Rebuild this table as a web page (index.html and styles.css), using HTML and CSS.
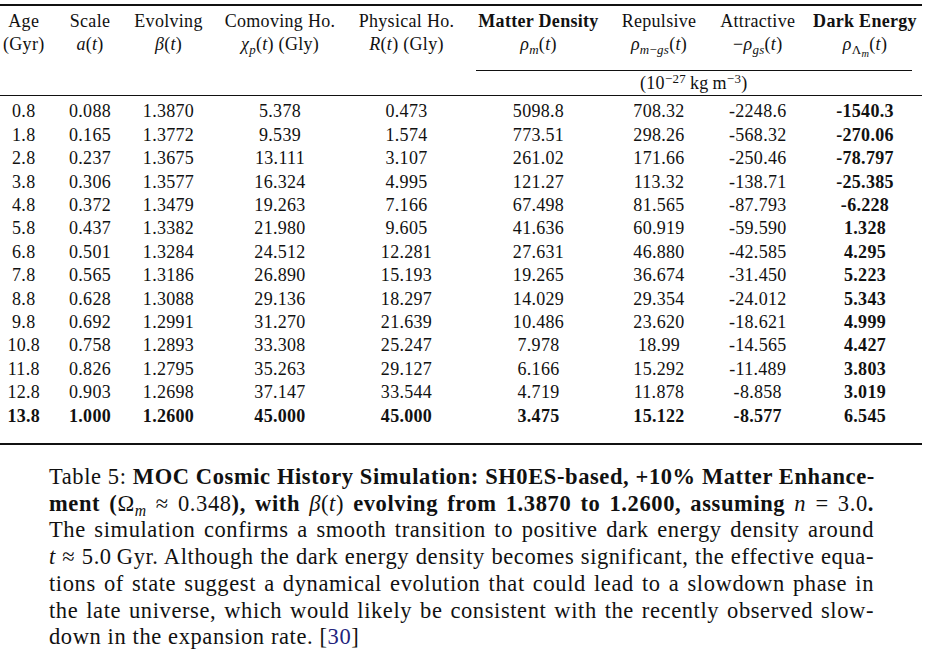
FILE: index.html
```html
<!DOCTYPE html>
<html lang="en">
<head>
<meta charset="utf-8">
<title>MOC Cosmic History Simulation</title>
<link rel="stylesheet" href="styles.css">
</head>
<body>
<div class="page">
  <table class="data">
    <colgroup>
      <col class="w1"><col class="w2"><col class="w3"><col class="w4"><col class="w5"><col class="w6"><col class="w7"><col class="w8"><col class="w9">
    </colgroup>
    <thead>
      <tr class="h1">
        <th class="c1">Age</th>
        <th>Scale</th>
        <th>Evolving</th>
        <th>Comoving Ho.</th>
        <th>Physical Ho.</th>
        <th class="b">Matter Density</th>
        <th>Repulsive</th>
        <th>Attractive</th>
        <th class="b">Dark Energy</th>
      </tr>
      <tr class="h2">
        <th class="c1">(Gyr)</th>
        <th><i>a</i>(<i>t</i>)</th>
        <th><i>β</i>(<i>t</i>)</th>
        <th><i>χ</i><sub><i>p</i></sub>(<i>t</i>) (Gly)</th>
        <th><i>R</i>(<i>t</i>) (Gly)</th>
        <th><i>ρ</i><sub><i>m</i></sub>(<i>t</i>)</th>
        <th><i>ρ</i><sub><i>m</i>−<i>gs</i></sub>(<i>t</i>)</th>
        <th>−<i>ρ</i><sub><i>gs</i></sub>(<i>t</i>)</th>
        <th><i>ρ</i><sub>Λ<sub class="sub2"><i>m</i></sub></sub>(<i>t</i>)</th>
      </tr>
      <tr class="units">
        <th colspan="5"></th>
        <th colspan="4"><div class="unit">(10<sup>−27</sup>&#8201;kg&#8201;m<sup>−3</sup>)</div></th>
      </tr>
    </thead>
    <tbody>
      <tr class="first"><td class="c1">0.8</td><td>0.088</td><td>1.3870</td><td>5.378</td><td>0.473</td><td>5098.8</td><td>708.32</td><td>-2248.6</td><td class="b">-1540.3</td></tr>
      <tr><td class="c1">1.8</td><td>0.165</td><td>1.3772</td><td>9.539</td><td>1.574</td><td>773.51</td><td>298.26</td><td>-568.32</td><td class="b">-270.06</td></tr>
      <tr><td class="c1">2.8</td><td>0.237</td><td>1.3675</td><td>13.111</td><td>3.107</td><td>261.02</td><td>171.66</td><td>-250.46</td><td class="b">-78.797</td></tr>
      <tr><td class="c1">3.8</td><td>0.306</td><td>1.3577</td><td>16.324</td><td>4.995</td><td>121.27</td><td>113.32</td><td>-138.71</td><td class="b">-25.385</td></tr>
      <tr><td class="c1">4.8</td><td>0.372</td><td>1.3479</td><td>19.263</td><td>7.166</td><td>67.498</td><td>81.565</td><td>-87.793</td><td class="b">-6.228</td></tr>
      <tr><td class="c1">5.8</td><td>0.437</td><td>1.3382</td><td>21.980</td><td>9.605</td><td>41.636</td><td>60.919</td><td>-59.590</td><td class="b">1.328</td></tr>
      <tr><td class="c1">6.8</td><td>0.501</td><td>1.3284</td><td>24.512</td><td>12.281</td><td>27.631</td><td>46.880</td><td>-42.585</td><td class="b">4.295</td></tr>
      <tr><td class="c1">7.8</td><td>0.565</td><td>1.3186</td><td>26.890</td><td>15.193</td><td>19.265</td><td>36.674</td><td>-31.450</td><td class="b">5.223</td></tr>
      <tr><td class="c1">8.8</td><td>0.628</td><td>1.3088</td><td>29.136</td><td>18.297</td><td>14.029</td><td>29.354</td><td>-24.012</td><td class="b">5.343</td></tr>
      <tr><td class="c1">9.8</td><td>0.692</td><td>1.2991</td><td>31.270</td><td>21.639</td><td>10.486</td><td>23.620</td><td>-18.621</td><td class="b">4.999</td></tr>
      <tr><td class="c1">10.8</td><td>0.758</td><td>1.2893</td><td>33.308</td><td>25.247</td><td>7.978</td><td>18.99</td><td>-14.565</td><td class="b">4.427</td></tr>
      <tr><td class="c1">11.8</td><td>0.826</td><td>1.2795</td><td>35.263</td><td>29.127</td><td>6.166</td><td>15.292</td><td>-11.489</td><td class="b">3.803</td></tr>
      <tr><td class="c1">12.8</td><td>0.903</td><td>1.2698</td><td>37.147</td><td>33.544</td><td>4.719</td><td>11.878</td><td>-8.858</td><td class="b">3.019</td></tr>
      <tr class="last"><td class="c1">13.8</td><td>1.000</td><td>1.2600</td><td>45.000</td><td>45.000</td><td>3.475</td><td>15.122</td><td>-8.577</td><td>6.545</td></tr>
    </tbody>
  </table>

  <p class="caption">
    <span class="line">Table 5: <b>MOC Cosmic History Simulation: SH0ES-based, +10% Matter Enhance-</b></span>
    <span class="line"><b>ment (</b>Ω<sub><i>m</i></sub> ≈ 0.348<b>), with </b><i>β</i>(<i>t</i>)<b> evolving from 1.3870 to 1.2600, assuming </b><i>n</i> = 3.0<b>.</b></span>
    <span class="line">The simulation confirms a smooth transition to positive dark energy density around</span>
    <span class="line"><i>t</i> ≈ 5.0&#8201;Gyr. Although the dark energy density becomes significant, the effective equa-</span>
    <span class="line">tions of state suggest a dynamical evolution that could lead to a slowdown phase in</span>
    <span class="line">the late universe, which would likely be consistent with the recently observed slow-</span>
    <span class="line end">down in the expansion rate. [<span class="cite">30</span>]</span>
  </p>
</div>
</body>
</html>
```

FILE: styles.css
```css
html, body {
  margin: 0;
  padding: 0;
  background: #ffffff;
}

body {
  font-family: "Liberation Serif", "Times New Roman", serif;
  color: #111111;
}

.page {
  width: 929px;
  height: 660px;
  padding-top: 4px;
  box-sizing: border-box;
  overflow: hidden;
}

.data {
  border-collapse: separate;
  border-spacing: 0;
  table-layout: fixed;
  width: 922px;
  border-top: 2px solid #111;
  border-bottom: 2px solid #111;
  font-size: 18px;
  letter-spacing: 0.3px;
}

.w1 { width: 56.5px; }
.w2 { width: 67px; }
.w3 { width: 90px; }
.w4 { width: 133px; }
.w5 { width: 120px; }
.w6 { width: 144px; }
.w7 { width: 97px; }
.w8 { width: 100.5px; }
.w9 { width: 114px; }

.data th,
.data td {
  padding: 0;
  text-align: center;
  white-space: nowrap;
  line-height: 23.4px;
  font-weight: normal;
}

.data .c1 {
  padding-right: 9px;
}

.data .b,
.data tr.last td {
  font-weight: bold;
}

.data i {
  font-style: italic;
}

.data sub {
  font-size: 0.72em;
  line-height: 0;
  vertical-align: -0.3em;
}

.data sub .sub2 {
  font-size: 0.8em;
  vertical-align: -0.25em;
}

.data tr.h1 th {
  padding-top: 4px;
}

.data tr.h2 th {
  padding-bottom: 13px;
}

.data tr.units th {
  border-bottom: 1px solid #111;
  line-height: 23.5px;
}

.unit {
  margin: 0 10px 0 9px;
  padding-top: 1px;
  border-top: 1px solid #111;
}

.unit sup {
  font-size: 0.72em;
  line-height: 0;
  vertical-align: 0.45em;
}

.data tr.first td {
  padding-top: 4px;
}

.data tr.last td {
  padding-bottom: 15px;
}

.caption {
  margin: 19px 0 0 49px;
  width: 825px;
  font-size: 22.5px;
  line-height: 26.7px;
  letter-spacing: 0.6px;
}

.caption .line {
  display: block;
  white-space: nowrap;
  text-align: justify;
  text-align-last: justify;
}

.caption .line.end {
  text-align: left;
  text-align-last: left;
}

.caption sub {
  font-size: 0.7em;
  line-height: 0;
  vertical-align: -0.3em;
}

.cite {
  color: #23237d;
}
```
